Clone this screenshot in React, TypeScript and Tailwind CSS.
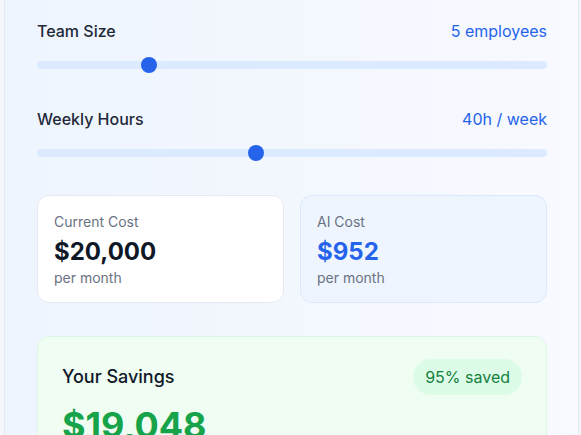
import type { ReactNode } from "react"

interface SliderRowProps {
  label: string
  value: string
  percent: number
  className?: string
}

function SliderRow({ label, value, percent, className }: SliderRowProps) {
  return (
    <div className={className}>
      <div className="flex items-center justify-between h-6">
        <span className="text-base font-medium text-gray-800">{label}</span>
        <span className="text-base text-[#2563eb]">{value}</span>
      </div>
      {/* track + thumb */}
      <div className="relative mt-[14px] h-4 flex items-center">
        <div className="w-full h-2 rounded-full bg-[#dbeafe]" />
        <div
          className="absolute top-0 w-4 h-4 -ml-2 rounded-full bg-[#2563eb]"
          style={{ left: `calc(8px + (100% - 16px) * ${percent})` }}
        />
      </div>
    </div>
  )
}

function CostCard({ title, amount, tone, children }: { title: string; amount: string; tone: "plain" | "blue"; children?: ReactNode }) {
  const box =
    tone === "blue"
      ? "bg-[#eef5ff] border-[#dbe8fd]"
      : "bg-white border-[#e6eaf0]"
  const amountColor = tone === "blue" ? "text-[#2563eb]" : "text-gray-900"
  return (
    <div className={`flex-1 rounded-xl border p-4 h-[108px] ${box}`}>
      <div className="text-sm text-gray-500 leading-5">{title}</div>
      <div className={`text-2xl font-bold leading-8 mt-1 ${amountColor}`}>{amount}</div>
      <div className="text-sm text-gray-500 leading-5">per month</div>
      {children}
    </div>
  )
}

export default function App() {
  return (
    <div className="h-[435px] overflow-hidden bg-[#f4f6f9] pl-1 pr-[2px] font-['Inter',sans-serif]">
      <div className="h-full border-x border-[#e3e8ef] bg-gradient-to-r from-[#eef5fe] via-[#f3f7fe] to-[#f8faff] pl-8 pr-[31px] pt-[19px]">
        <SliderRow label="Team Size" value="5 employees" percent={0.21} />
        <SliderRow label="Weekly Hours" value="40h / week" percent={0.428} className="mt-[34px]" />

        <div className="flex gap-4 mt-[34px]">
          <CostCard title="Current Cost" amount="$20,000" tone="plain" />
          <CostCard title="AI Cost" amount="$952" tone="blue" />
        </div>

        <div className="mt-[33px] rounded-xl border border-[#dcf7e4] bg-[#effdf3] px-6 pt-[22px] pb-6">
          <div className="flex items-center justify-between">
            <span className="text-lg font-medium text-gray-900 leading-[26px]">Your Savings</span>
            <span className="rounded-full bg-[#dcfce7] px-3 py-1.5 text-base text-[#15803d]">95% saved</span>
          </div>
          <div className="mt-2.5 text-4xl font-bold text-[#16a34a]">$19,048</div>
        </div>
      </div>
    </div>
  )
}
